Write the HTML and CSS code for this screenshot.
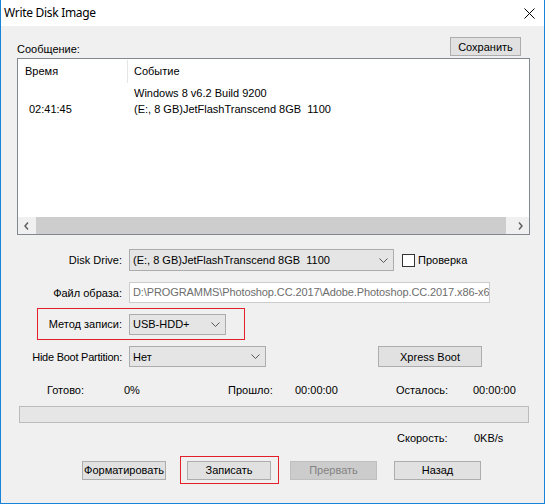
FILE: index.html
```html
<!DOCTYPE html>
<html lang="ru">
<head>
<meta charset="utf-8">
<title>Write Disk Image</title>
<link rel="stylesheet" href="styles.css">
</head>
<body>
<div class="window">
  <div class="titlebar">
    <span class="title">Write Disk Image</span>
    <svg class="close" width="11" height="11" viewBox="0 0 11 11"><path d="M0.5 0.5 L10.5 10.5 M10.5 0.5 L0.5 10.5" stroke="#000" stroke-width="1" fill="none"/></svg>
  </div>
  <div class="body">
    <div class="msg-head">
      <span class="lbl-msg">Сообщение:</span>
      <div class="btn btn-save">Сохранить</div>
    </div>
    <div class="log">
      <div class="log-head">
        <div class="c1 hc1">Время</div>
        <div class="c2">Событие</div>
      </div>
      <div class="log-rows">
        <div class="log-row"><div class="c1 rc1"></div><div class="c2">Windows 8 v6.2 Build 9200</div></div>
        <div class="log-row"><div class="c1 rc1">02:41:45</div><div class="c2">(E:, 8 GB)JetFlashTranscend 8GB&nbsp; 1100</div></div>
      </div>
      <div class="hscroll">
        <div class="sarrow"><svg width="5" height="8" viewBox="0 0 5 8"><path d="M4 0.5 L1 4 L4 7.5" stroke="#606060" stroke-width="1.5" fill="none"/></svg></div>
        <div class="track"><div class="thumb"></div></div>
        <div class="sarrow"><svg width="5" height="8" viewBox="0 0 5 8"><path d="M1 0.5 L4 4 L1 7.5" stroke="#606060" stroke-width="1.5" fill="none"/></svg></div>
      </div>
    </div>

    <div class="form-row row-drive">
      <span class="lbl">Disk Drive:</span>
      <div class="select sel-drive"><span class="sel-text">(E:, 8 GB)JetFlashTranscend 8GB&nbsp; 1100</span><svg class="chev" width="9" height="5" viewBox="0 0 9 5"><path d="M0.5 0.5 L4.5 4.5 L8.5 0.5" stroke="#555" stroke-width="1" fill="none"/></svg></div>
      <span class="check"></span><span class="check-lbl">Проверка</span>
    </div>

    <div class="form-row row-file">
      <span class="lbl">Файл образа:</span>
      <div class="field">D:\PROGRAMMS\Photoshop.CC.2017\Adobe.Photoshop.CC.2017.x86-x64</div>
    </div>

    <div class="form-row row-method">
      <span class="lbl lbl-method">Метод записи:</span>
      <div class="select sel-method"><span class="sel-text">USB-HDD+</span><svg class="chev" width="9" height="5" viewBox="0 0 9 5"><path d="M0.5 0.5 L4.5 4.5 L8.5 0.5" stroke="#555" stroke-width="1" fill="none"/></svg></div>
    </div>

    <div class="form-row row-hide">
      <span class="lbl lbl-hide">Hide Boot Partition:</span>
      <div class="select sel-hide"><span class="sel-text">Нет</span><svg class="chev" width="9" height="5" viewBox="0 0 9 5"><path d="M0.5 0.5 L4.5 4.5 L8.5 0.5" stroke="#555" stroke-width="1" fill="none"/></svg></div>
      <div class="btn btn-xpress">Xpress Boot</div>
    </div>

    <div class="status">
      <span>Готово:</span><span>0%</span><span>Прошло:</span><span>00:00:00</span><span>Осталось:</span><span>00:00:00</span>
    </div>

    <div class="progress"></div>

    <div class="speed"><span>Скорость:</span><span>0KB/s</span></div>

    <div class="actions">
      <div class="btn btn-act btn-format">Форматировать</div>
      <div class="mark"><div class="btn btn-act">Записать</div></div>
      <div class="btn btn-act btn-dis btn-stop">Прервать</div>
      <div class="btn btn-act btn-back">Назад</div>
    </div>
  </div>
</div>
</body>
</html>
```

FILE: styles.css
```css
* { box-sizing: border-box; }
html, body { margin: 0; padding: 0; background: #f0f0f0; }
body {
  font-family: "Liberation Sans", Arial, sans-serif;
  font-size: 11px;
  color: #000;
}
.window {
  width: 545px;
  height: 504px;
  background: #f0f0f0;
  border-left: 1px solid #1883d7;
  border-right: 1px solid #1883d7;
  border-bottom: 1px solid #1883d7;
  overflow: hidden;
}
.titlebar {
  height: 26px;
  background: #fff;
  display: flex;
  align-items: center;
  padding-left: 3px;
}
.title {
  font-family: "Noto Sans", "Open Sans", sans-serif;
  font-size: 12px;
  letter-spacing: -0.3px;
  color: #000;
  line-height: 16px;
}
.close { margin-left: auto; margin-right: 9px; display: block; }

.body { padding: 0 14px 0 16px; }

.msg-head {
  margin-top: 11px;
  height: 19px;
  display: flex;
  justify-content: space-between;
  align-items: flex-end;
}
.lbl-msg { line-height: 14px; }

.btn {
  background: #e1e1e1;
  border: 1px solid #adadad;
  display: flex;
  align-items: center;
  justify-content: center;
  line-height: 14px;
  white-space: nowrap;
}
.btn-save { width: 71px; height: 19px; margin-right: 9px; }

.log {
  margin-top: 2px;
  height: 177px;
  border: 1px solid #828790;
  background: #fff;
  display: flex;
  flex-direction: column;
}
.log-head { height: 24px; display: flex; }
.log-head .c1, .log-head .c2 { line-height: 24px; }
.c1 { width: 110px; flex: none; }
.hc1 { padding-left: 7px; border-right: 1px solid #e5e5e5; height: 23px; margin-top: 1px; line-height: 22px !important; }
.c2 { padding-left: 6px; white-space: nowrap; }
.log-rows { flex: 1; padding-top: 2px; }
.log-row { display: flex; height: 16px; line-height: 16px; }
.rc1 { padding-left: 11px; }

.hscroll { height: 17px; display: flex; background: #f0f0f0; }
.sarrow { width: 17px; height: 17px; display: flex; align-items: center; justify-content: center; }
.track { flex: 1; padding: 0 6px 0 1px; display: flex; align-items: center; }
.thumb { height: 17px; width: 100%; background: #cdcdcd; }

.form-row { display: flex; align-items: center; }
.lbl { width: 105px; flex: none; text-align: right; margin-right: 7px; white-space: nowrap; }
.lbl-hide { letter-spacing: -0.25px; }

.select {
  background: #e5e5e5;
  border: 1px solid #acacac;
  display: flex;
  align-items: center;
  padding-left: 3px;
  white-space: nowrap;
}
.sel-text { flex: 1; overflow: hidden; }
.chev { flex: none; margin-right: 5px; margin-left: 4px; }

.row-drive { margin-top: 14px; }
.sel-drive { width: 265px; height: 22px; }
.check {
  width: 13px; height: 13px; border: 1px solid #333; background: #fff;
  margin-left: 8px; flex: none;
}
.check-lbl { margin-left: 3px; }

.row-file { margin-top: 11px; }
.field {
  width: 361px; height: 21px;
  background: #fff;
  border: 1px solid #cccccc;
  color: #6d6d6d;
  padding-left: 3px;
  line-height: 19px;
  letter-spacing: -0.1px;
  white-space: nowrap;
  overflow: hidden;
}

.row-method {
  margin-top: 5px;
  margin-left: 20px;
  width: 208px;
  height: 32px;
  border: 1px solid #e3202a;
}
.lbl-method { width: 84px; }
.sel-method { width: 97px; height: 21px; }

.row-hide { margin-top: 6px; }
.sel-hide { width: 137px; height: 21px; }
.btn-xpress { width: 104px; height: 21px; margin-left: 112px; }

.status {
  margin-top: 15px;
  display: grid;
  grid-template-columns: 77px 104px 67px 101px 77px auto;
  padding-left: 30px;
  line-height: 16px;
}

.progress {
  margin: 8px 1px 0 2px;
  height: 17px;
  background: #e6e6e6;
  border: 1px solid #bcbcbc;
}

.speed {
  margin-top: 7px;
  display: grid;
  grid-template-columns: 77px auto;
  padding-left: 380px;
  line-height: 16px;
}

.actions {
  margin-top: 10px;
  display: flex;
  align-items: center;
  padding-left: 65px;
}
.btn-act { height: 19px; }
.btn-format { width: 84px; }
.mark {
  margin-left: 14px;
  width: 99px;
  height: 28px;
  border: 1px solid #e3202a;
  display: flex;
  align-items: center;
  padding-left: 6px;
}
.mark .btn { width: 84px; }
.btn-stop { width: 87px; margin-left: 11px; }
.btn-dis { background: #cccccc; border-color: #bfbfbf; color: #838383; }
.btn-back { width: 87px; margin-left: 17px; }
```
